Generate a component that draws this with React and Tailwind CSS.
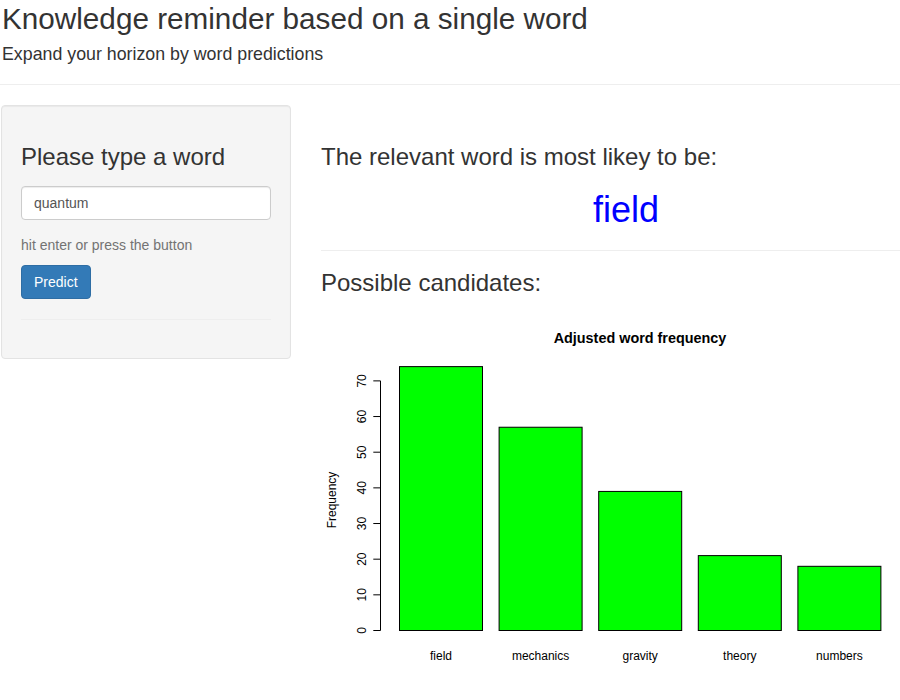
import React from "react";

const bars = [
  { name: "field", v: 74 },
  { name: "mechanics", v: 57 },
  { name: "gravity", v: 39 },
  { name: "theory", v: 21 },
  { name: "numbers", v: 18 },
];

function Chart() {
  const y0 = 630.5;
  const per = 3.566;
  const ticks = [0, 10, 20, 30, 40, 50, 60, 70];
  return (
    <svg width="580" height="380" viewBox="320 310 580 380" className="block">
      <text x="640" y="343" textAnchor="middle" fontSize="14.4" fontWeight="bold" fill="#000">
        Adjusted word frequency
      </text>
      {bars.map((b, i) => {
        const x = 399.5 + i * 99.6;
        const h = b.v * per;
        return (
          <g key={b.name}>
            <rect x={x} y={y0 - h} width="83" height={h} fill="#00ff00" stroke="#000" strokeWidth="1" />
            <text x={x + 41.5} y="660" textAnchor="middle" fontSize="12" fill="#000">
              {b.name}
            </text>
          </g>
        );
      })}
      <line x1="380.5" y1={y0 - 70 * per} x2="380.5" y2={y0} stroke="#000" strokeWidth="1" />
      {ticks.map((t) => {
        const y = y0 - t * per;
        return (
          <g key={t}>
            <line x1="373.3" y1={y} x2="380.5" y2={y} stroke="#000" strokeWidth="1" />
            <text
              x="366"
              y={y}
              textAnchor="middle"
              fontSize="12"
              fill="#000"
              transform={`rotate(-90 366 ${y})`}
            >
              {t}
            </text>
          </g>
        );
      })}
      <text
        x="335.5"
        y="500"
        textAnchor="middle"
        fontSize="12"
        fill="#000"
        transform="rotate(-90 335.5 500)"
      >
        Frequency
      </text>
    </svg>
  );
}

export default function App() {
  return (
    <div className="w-[900px] h-[700px] overflow-hidden bg-white text-[#333] font-['Liberation_Sans',Arial,sans-serif] text-[14px]">
      <div className="pl-[2px] pt-[2px]">
        <h2 className="text-[29.7px] leading-[33px] font-normal">Knowledge reminder based on a single word</h2>
        <h4 className="mt-[9px] text-[17.8px] leading-[20px] font-normal">Expand your horizon by word predictions</h4>
      </div>
      <div className="mt-[20px] h-px bg-[#eeeeee]" />
      <div className="mt-[20px] flex">
        <div className="pl-[1px]">
          <div className="w-[290px] h-[254px] box-border border border-[#e3e3e3] bg-[#f5f5f5] rounded-[4px] px-[19px] pt-[38px] shadow-[inset_0_1px_1px_rgba(0,0,0,0.05)]">
            <h3 className="text-[24px] leading-[26px] font-normal">Please type a word</h3>
            <input
              defaultValue="quantum"
              className="mt-[16px] block w-[250px] h-[34px] box-border border border-[#cccccc] rounded-[4px] bg-white px-[12px] text-[14px] text-[#555] outline-none shadow-[inset_0_1px_1px_rgba(0,0,0,0.075)]"
            />
            <p className="mt-[15px] text-[14px] leading-[20px] text-[#737373]">hit enter or press the button</p>
            <button className="mt-[10px] block h-[34px] box-border px-[12px] bg-[#337ab7] border border-[#2e6da4] rounded-[4px] text-white text-[14px] leading-[20px]">
              Predict
            </button>
            <div className="mt-[20px] h-px bg-[#eeeeee]" />
          </div>
        </div>
        <div className="ml-[30px] flex-1">
          <h3 className="mt-[39px] text-[24px] leading-[26px] font-normal">The relevant word is most likey to be:</h3>
          <div className="mt-[20px] pl-[272px] text-[36px] leading-[40px] text-[#0000ff]">field</div>
          <div className="mt-[20px] h-px bg-[#eeeeee]" />
          <h3 className="mt-[19px] text-[24px] leading-[26px] font-normal">Possible candidates:</h3>
          <div className="mt-[14px] -ml-[1px]">
            <Chart />
          </div>
        </div>
      </div>
    </div>
  );
}
